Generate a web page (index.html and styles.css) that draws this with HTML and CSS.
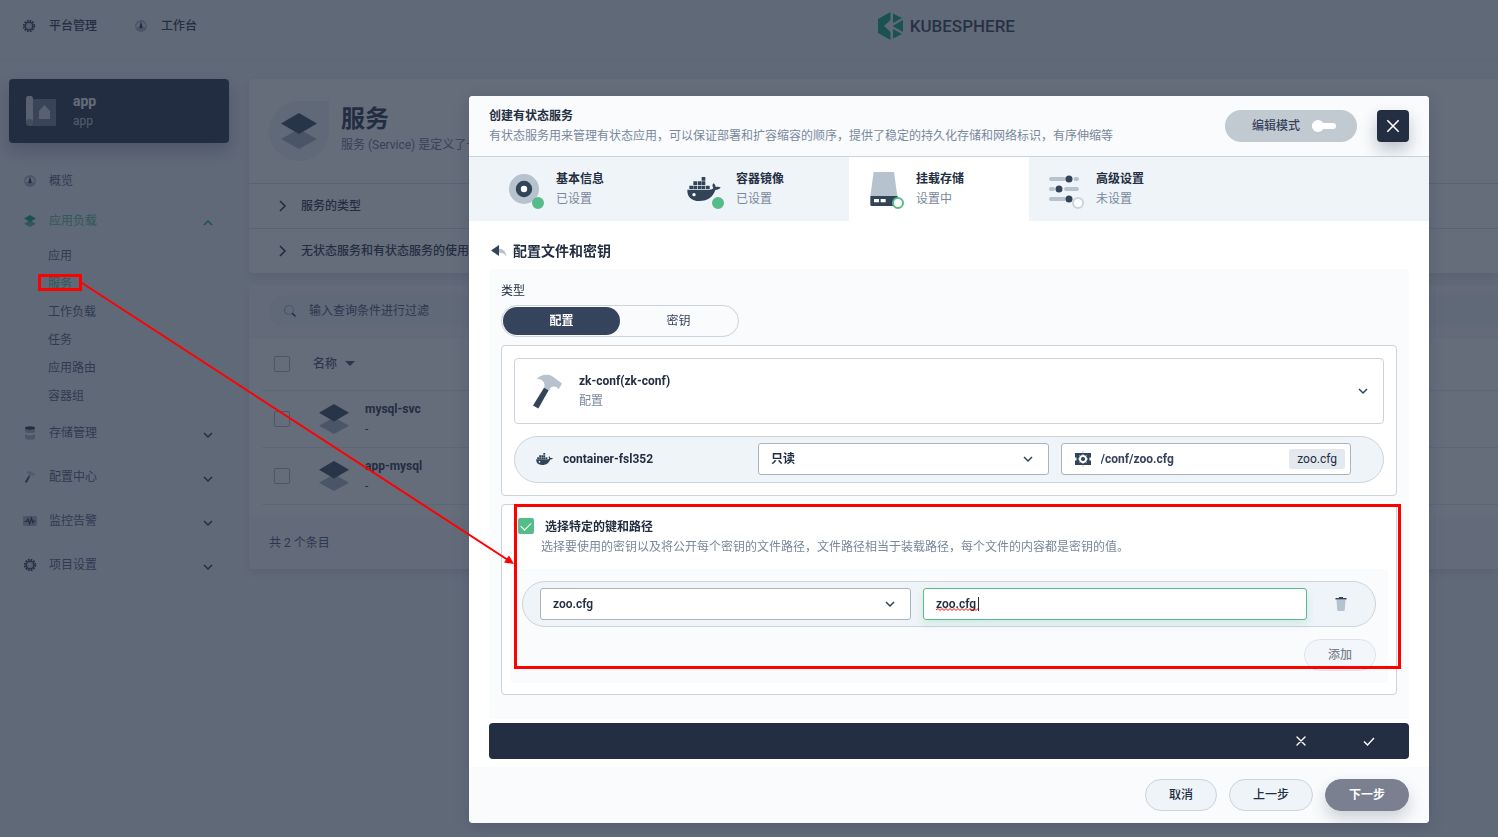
FILE: index.html
```html
<!DOCTYPE html>
<html lang="zh-CN">
<head>
<meta charset="utf-8">
<title>KubeSphere</title>
<link rel="stylesheet" href="styles.css">
</head>
<body>
<svg class="sprite" aria-hidden="true">
  <symbol id="i-gear" viewBox="0 0 16 16">
    <circle cx="8" cy="8" r="5.400" fill="none" stroke="#242e42" stroke-width="1.600" stroke-dasharray="1.700 1.127"/>
    <circle cx="8" cy="8" r="3.900" fill="#b6c2cd" stroke="#242e42" stroke-width="1.400"/>
    <circle cx="8" cy="8" r="1.600" fill="#dde4ea"/>
  </symbol>
  <symbol id="i-dash" viewBox="0 0 16 16">
    <circle cx="8" cy="8" r="6" fill="#a4b2c0"/>
    <path d="M3 9a5 5 0 0 1 10 0z" fill="#dfe6ec"/>
    <path d="M8 3.500l1.400 4.700a1.500 1.500 0 1 1-2.800 0z" fill="#242e42"/>
  </symbol>
  <symbol id="i-layers" viewBox="0 0 36 36">
    <path class="layer-low" d="M0 26l18-10 18 10-18 10z"/>
    <path class="layer-top" d="M0 10.500L18 0l18 10.500L18 21z"/>
  </symbol>
  <symbol id="i-db" viewBox="0 0 16 16">
    <path d="M3 3v3.500c0 1 2 1.500 5 1.500s5-.5 5-1.500V3z" fill="#a4b2c0"/>
    <path d="M3 9v4c0 1 2 1.700 5 1.700s5-.7 5-1.700V9c-1 .9-3 1.200-5 1.200S4 9.900 3 9z" fill="#a4b2c0"/>
    <ellipse cx="8" cy="3" rx="5" ry="1.700" fill="#242e42"/>
  </symbol>
  <symbol id="i-hammer" viewBox="0 0 90 104">
    <path d="M11 15C20 5 29 2 40 2c13 0 21 5 28 12l19 14-10 17c-5-6-10-8-15-8-7 0-11 4-13 12L33 42c3-9 2-15-3-21-5-5-11-7-19-6z" fill="#b6c2cd"/>
    <path d="M33 41l14 7-31 55L0 94z" fill="#324558"/>
  </symbol>
  <symbol id="i-monitor" viewBox="0 0 16 16">
    <rect x="1" y="3" width="14" height="10" rx="1" fill="#a4b2c0"/>
    <path d="M2.500 8.500h2L6 6l1.500 5L9.500 5l1.500 5 1-2h1.500" fill="none" stroke="#242e42" stroke-width="1.200"/>
  </symbol>
  <symbol id="i-docker" viewBox="0 0 100 72">
    <g fill="#324558">
      <path d="M43 0h11v11H43zM18 13h11v11H18zM31 13h11v11H31zM43 13h11v11H43zM6 26h11v10H6zM18 26h11v10H18zM31 26h11v10H31zM43 26h11v10H43zM56 26h11v10H56z"/>
      <path d="M0 38h66c6 0 10-1 12-5-4-5-3-10 0-14 5 3 7 7 7 11 5-1 10-1 15 1-3 6-9 8-16 8C77 59 63 72 36 72 12 72-1 59 0 38z"/>
    </g>
    <circle cx="20" cy="53" r="5" fill="#fff"/>
  </symbol>
  <symbol id="i-disc" viewBox="0 0 30 30">
    <circle cx="15" cy="15" r="15" fill="#b6c2cd"/>
    <circle cx="15" cy="15" r="5.700" fill="#fff" stroke="#324558" stroke-width="5"/>
  </symbol>
  <symbol id="i-drive" viewBox="0 0 82 102">
    <path d="M10 0h61l10 73H0z" fill="#b6c2cd"/>
    <path d="M0 72h82v26a4 4 0 0 1-4 4H4a4 4 0 0 1-4-4z" fill="#324558"/>
    <path d="M11 81h15v10H11zM31 81h15v10H31z" fill="#fff"/>
  </symbol>
  <symbol id="i-sliders" viewBox="0 0 30 28">
    <path d="M2 4h13M26.500 4H28M2 14h2M17 14h11M2 24h13" stroke="#b6c2cd" stroke-width="4" stroke-linecap="round"/>
    <circle cx="20" cy="4" r="3.500" fill="#324558"/><circle cx="10" cy="14" r="3.500" fill="#324558"/><circle cx="20" cy="24" r="3.500" fill="#324558"/>
  </symbol>
  <symbol id="i-down" viewBox="0 0 10 10"><path d="M1 3l4 4 4-4" fill="none" stroke="currentColor" stroke-width="1.500"/></symbol>
  <symbol id="i-up" viewBox="0 0 10 10"><path d="M1 7l4-4 4 4" fill="none" stroke="currentColor" stroke-width="1.500"/></symbol>
  <symbol id="i-right" viewBox="0 0 12 12"><path d="M3 1l5 5-5 5" fill="none" stroke="currentColor" stroke-width="1.600"/></symbol>
  <symbol id="i-x" viewBox="0 0 16 16"><path d="M1.500 1.500l13 13M14.500 1.500l-13 13" fill="none" stroke="currentColor" stroke-width="1.800"/></symbol>
</svg>

<div class="page">
  <header class="topbar">
    <nav class="topnav">
      <a href="#"><svg class="ic16"><use href="#i-gear"/></svg>平台管理</a>
      <a href="#"><svg class="ic16"><use href="#i-dash"/></svg>工作台</a>
    </nav>
    <a class="logo" href="#">
      <svg width="26" height="28" viewBox="0 0 26 28" aria-hidden="true">
        <g fill="#00a971"><path d="M0 7L12.500 0v8L6 14l6.500 6v8L0 21z"/><path d="M15 1.500l9 4.500-9 5z"/><path d="M25 8v12L14.500 14z"/><path d="M15 17l9 5-9 4.500z"/></g>
      </svg>
      <span>KUBESPHERE</span>
    </a>
  </header>
  <div class="layout">
    <aside class="sidebar">
      <div class="project">
        <svg width="30" height="30" viewBox="0 0 30 30" aria-hidden="true">
          <path d="M6 3h24v27H3z" fill="#6c788c"/><path d="M0 3a3.400 3.400 0 0 1 7 0v23H0z" fill="#d5dbe2"/><circle cx="3.500" cy="26.500" r="3.500" fill="#8893a3"/><path d="M13 23v-8l5.500-6 5.500 6v8z" fill="#d5dbe2"/>
        </svg>
        <div><strong>app</strong><span>app</span></div>
      </div>
      <ul class="menu">
        <li><a class="item" href="#"><svg class="ic16"><use href="#i-dash"/></svg>概览</a></li>
        <li><a class="item on" href="#"><svg class="ic12"><use href="#i-layers"/></svg>应用负载<svg class="chev"><use href="#i-up"/></svg></a>
          <ul class="submenu">
            <li><a href="#">应用</a></li>
            <li><a class="on" href="#">服务</a></li>
            <li><a href="#">工作负载</a></li>
            <li><a href="#">任务</a></li>
            <li><a href="#">应用路由</a></li>
            <li><a href="#">容器组</a></li>
          </ul>
        </li>
        <li><a class="item tall" href="#"><svg class="ic16"><use href="#i-db"/></svg>存储管理<svg class="chev"><use href="#i-down"/></svg></a></li>
        <li><a class="item tall" href="#"><svg class="ic12"><use href="#i-hammer"/></svg>配置中心<svg class="chev"><use href="#i-down"/></svg></a></li>
        <li><a class="item tall" href="#"><svg class="ic16"><use href="#i-monitor"/></svg>监控告警<svg class="chev"><use href="#i-down"/></svg></a></li>
        <li><a class="item tall" href="#"><svg class="ic16"><use href="#i-gear"/></svg>项目设置<svg class="chev"><use href="#i-down"/></svg></a></li>
      </ul>
    </aside>
    <main class="main">
      <section class="card">
        <div class="intro">
          <div class="leaf"><svg class="ic36"><use href="#i-layers"/></svg></div>
          <div><h1>服务</h1><p>服务 (Service) 是定义了一组</p></div>
        </div>
        <a class="tip" href="#"><svg class="ic12"><use href="#i-right"/></svg>服务的类型</a>
        <a class="tip" href="#"><svg class="ic12"><use href="#i-right"/></svg>无状态服务和有状态服务的使用场景</a>
      </section>
      <section class="card">
        <div class="toolbar">
          <label class="search">
            <svg width="14" height="14" viewBox="0 0 14 14" aria-hidden="true"><circle cx="6" cy="6" r="4.500" fill="none" stroke="#a4b2c0" stroke-width="1.200"/><path d="M9 9l3.500 3.500" stroke="#242e42" stroke-width="1.600"/></svg>
            <input type="text" aria-label="查询" placeholder="输入查询条件进行过滤">
          </label>
        </div>
        <table class="list">
          <thead><tr><th class="c-check"><input type="checkbox" aria-label="全选"></th><th colspan="2" class="c-head">名称<i class="caret-down"></i></th></tr></thead>
          <tbody>
            <tr><td class="c-check"><input type="checkbox" aria-label="mysql-svc"></td><td class="c-icon"><svg class="ic30"><use href="#i-layers"/></svg></td><td class="c-name"><strong>mysql-svc</strong><span>-</span></td></tr>
            <tr><td class="c-check"><input type="checkbox" aria-label="app-mysql"></td><td class="c-icon"><svg class="ic30"><use href="#i-layers"/></svg></td><td class="c-name"><strong>app-mysql</strong><span>-</span></td></tr>
          </tbody>
        </table>
        <div class="total">共 2 个条目</div>
      </section>
    </main>
  </div>
</div>

<div class="mask">
  <div class="modal" role="dialog" aria-labelledby="dlg-title">
    <header class="m-head">
      <div class="m-title"><h2 id="dlg-title">创建有状态服务</h2><p>有状态服务用来管理有状态应用，可以保证部署和扩容缩容的顺序，提供了稳定的持久化存储和网络标识，有序伸缩等</p></div>
      <button class="mode" type="button">编辑模式<i class="switch"></i></button>
      <button class="close" type="button" aria-label="关闭"><svg width="14" height="14"><use href="#i-x"/></svg></button>
    </header>
    <nav class="tabs">
      <a class="tab" href="#"><span class="t-icon"><svg width="30" height="30"><use href="#i-disc"/></svg><i class="dot done"></i></span><span><b>基本信息</b><small>已设置</small></span></a>
      <a class="tab" href="#"><span class="t-icon"><svg width="34" height="24"><use href="#i-docker"/></svg><i class="dot done"></i></span><span><b>容器镜像</b><small>已设置</small></span></a>
      <a class="tab current" href="#"><span class="t-icon"><svg width="28" height="34"><use href="#i-drive"/></svg><i class="dot doing"></i></span><span><b>挂载存储</b><small>设置中</small></span></a>
      <a class="tab" href="#"><span class="t-icon"><svg width="30" height="28"><use href="#i-sliders"/></svg><i class="dot"></i></span><span><b>高级设置</b><small>未设置</small></span></a>
    </nav>
    <form class="m-body">
      <h3><a href="#" aria-label="返回"><svg width="16" height="12" viewBox="0 0 16 12"><path d="M7 3.500c5 0 8 3 8.500 8-2-3-4.500-4-8.500-4z" fill="#b6c2cd"/><path d="M0 5.500L8 0v11z" fill="#324558"/></svg></a>配置文件和密钥</h3>
      <div class="panel">
        <div class="label" id="kind">类型</div>
        <div class="segment" role="group" aria-labelledby="kind">
          <button class="active" type="button">配置</button><button type="button">密钥</button>
        </div>
        <div class="box pad">
          <button class="resource" type="button" aria-haspopup="listbox">
            <svg width="30" height="35"><use href="#i-hammer"/></svg>
            <span class="r-text"><b>zk-conf(zk-conf)</b><small>配置</small></span>
            <svg class="ch"><use href="#i-down"/></svg>
          </button>
          <div class="pill mount">
            <div class="container"><svg width="17" height="12"><use href="#i-docker"/></svg>container-fsl352</div>
            <div class="select"><select aria-label="读写模式"><option>只读</option></select><svg class="ch"><use href="#i-down"/></svg></div>
            <div class="field path">
              <svg width="16" height="16" viewBox="0 0 16 16" aria-hidden="true"><path d="M7.500 0h1v16h-1z" fill="#b6c2cd"/><path d="M0 2h16v4.500h-1.500v3H16V14H0V9.500h1.500v-3H0z" fill="#324558"/><circle cx="8" cy="8" r="3" fill="none" stroke="#fff" stroke-width="2"/><path d="M8 3.200v9.600M3.200 8h9.600M4.600 4.600l6.800 6.800M11.400 4.600l-6.800 6.800" stroke="#fff" stroke-width="1"/><circle cx="8" cy="8" r="2" fill="#324558"/></svg>
              <input type="text" aria-label="挂载路径" value="/conf/zoo.cfg">
              <span class="tag">zoo.cfg</span>
            </div>
          </div>
        </div>
        <div class="box keys">
          <label class="pick"><input type="checkbox" checked><b>选择特定的键和路径</b></label>
          <p>选择要使用的密钥以及将公开每个密钥的文件路径，文件路径相当于装载路径，每个文件的内容都是密钥的值。</p>
          <div class="items">
            <div class="pill kv">
              <div class="select"><select aria-label="键"><option>zoo.cfg</option></select><svg class="ch"><use href="#i-down"/></svg></div>
              <div class="field focus">
                <input type="text" aria-label="路径" value="zoo.cfg" spellcheck="false">
                <svg class="squiggle" width="43" height="3" viewBox="0 0 43 3" aria-hidden="true"><path d="M0 2l2-1.500 2 2 2-2 2 2 2-2 2 2 2-2 2 2 2-2 2 2 2-2 2 2 2-2 2 2 2-2 2 2 2-2 2 2 2-2 2 2 2-2 1 1" fill="none" stroke="#f00"/></svg>
                <i class="cursor"></i>
              </div>
              <button class="trash" type="button" aria-label="删除"><svg width="12" height="14" viewBox="0 0 12 14"><path d="M1.500 3h9l-.7 9.500a1.500 1.500 0 0 1-1.500 1.500H3.700a1.500 1.500 0 0 1-1.500-1.500z" fill="#b6c2cd"/><path d="M.5 1H4V0h4v1h3.500v1.500H.5z" fill="#324558"/></svg></button>
            </div>
            <button class="btn add" type="button">添加</button>
          </div>
        </div>
      </div>
      <div class="confirm">
        <button type="button" aria-label="取消编辑"><svg width="12" height="12" viewBox="0 0 12 12"><path d="M2 2l8 8M10 2l-8 8" fill="none" stroke="currentColor" stroke-width="1.400" stroke-linecap="round"/></svg></button>
        <button type="button" aria-label="确认"><svg width="12" height="12" viewBox="0 0 12 12"><path d="M1 6.500L4.500 10 11 3" fill="none" stroke="currentColor" stroke-width="1.400"/></svg></button>
      </div>
    </form>
    <footer class="m-foot">
      <button class="btn" type="button">取消</button>
      <button class="btn wide" type="button">上一步</button>
      <button class="btn wide next" type="button">下一步</button>
    </footer>
  </div>
</div>

<svg class="marks" aria-hidden="true">
  <g fill="none" stroke="#f00" stroke-width="3">
    <rect x="39.500" y="275.500" width="41" height="14"/>
    <rect x="515.500" y="505.500" width="884" height="162"/>
  </g>
  <path d="M82 283l426 277" stroke="#f00" stroke-width="2"/>
  <path d="M514 564l-10-1.500 5-7z" fill="#f00"/>
</svg>
</body>
</html>
```
FILE: styles.css
```css
* { box-sizing: border-box; }
html, body { height: 100%; }
body {
  margin: 0;
  overflow: hidden;
  background: #eff4f9;
  color: #242e42;
  font: 12px/20px Roboto, "Noto Sans CJK SC", sans-serif;
}
h1, h2, h3, p, ul { margin: 0; padding: 0; }
ul { list-style: none; }
a { color: inherit; text-decoration: none; }
button, input, select { font: inherit; color: inherit; margin: 0; }
button { cursor: pointer; padding: 0; border: 0; background: none; }
small { font-size: 12px; }
svg { flex: none; display: block; }
b, strong { font-weight: 600; }
.sprite { position: absolute; width: 0; height: 0; }
.ic12 { width: 12px; height: 12px; }
.ic16 { width: 16px; height: 16px; }
.ic30 { width: 30px; height: 30px; }
.ic36 { width: 36px; height: 36px; }
.layer-low { fill: var(--layer-low, #a4b2c0); }
.layer-top { fill: var(--layer-top, #324558); }
.on { color: #55bc8a; --layer-top: #00a971; --layer-low: #55bc8a; }

/* Top bar */
.topbar {
  display: flex;
  align-items: center;
  height: 60px;
  padding: 0 0 8px 21px;
  border-bottom: 1px solid #e3e9ef;
}
.topnav { display: flex; gap: 36px; width: 58%; }
.topnav a { display: flex; align-items: center; gap: 12px; font-weight: 500; }
.logo { display: flex; align-items: center; gap: 6px; color: #303a4c; font-size: 17px; font-weight: 500; }

/* Sidebar */
.layout { display: flex; gap: 20px; padding: 19px 0 0 9px; }
.sidebar { flex: 0 0 220px; }
.project {
  display: flex;
  align-items: center;
  gap: 17px;
  height: 64px;
  padding: 0 17px;
  border-radius: 4px;
  background: #242e42;
  box-shadow: 0 8px 16px rgba(36, 46, 66, .3);
  color: #fff;
}
.project strong, .project span { display: block; }
.project strong { font-size: 14px; font-weight: 700; }
.project span { color: #c1c9d1; }
.menu { padding-top: 18px; color: #4a5974; }
.item { display: flex; align-items: center; gap: 11px; height: 40px; padding: 0 16px 0 13px; }
.item.tall { height: 44px; }
.item .ic12 { margin: 0 2px; }
.item .chev { width: 10px; height: 10px; margin: 3px 0 0 auto; color: #242e42; }
.item.on .chev { color: #00a971; }
.submenu { padding: 1px 0 1px 39px; }
.submenu a { display: block; line-height: 28px; }

/* Main column */
.main { flex: 1; display: grid; gap: 12px; align-content: start; }
.card { background: #fff; border-radius: 4px 0 0 4px; box-shadow: 0 4px 8px rgba(36, 46, 66, .1); overflow: hidden; }
.intro { display: flex; gap: 12px; height: 104px; padding: 22px 20px; }
.leaf { display: grid; place-items: center; width: 60px; height: 60px; border-radius: 50% 0 50% 50%; background: #eff4f9; }
.intro h1 { font-size: 24px; line-height: 36px; font-weight: 600; }
.intro p { line-height: 16px; color: #5f708a; }
.tip { display: flex; align-items: center; gap: 12px; height: 45px; padding: 0 28px; border-top: 1px solid #d5dde4; font-weight: 500; }
.toolbar { padding: 10px 0 10px 20px; background: #f9fbfd; border-bottom: 1px solid #eff4f9; }
.search { display: flex; align-items: center; gap: 12px; height: 32px; padding: 0 14px; border-radius: 16px 0 0 16px; background: #eff4f9; }
.search input { flex: 1; border: 0; padding: 0; background: none; outline: 0; }
.search input::placeholder { color: #404e68; }
.list { width: 100%; border-spacing: 0; padding-left: 13px; }
.list th { height: 52px; padding: 0; text-align: left; font-weight: 500; color: #404e68; }
.list td { height: 57px; padding: 0; border-top: 1px solid #e3e9ef; }
.list tbody tr:last-child td { border-bottom: 1px solid #e3e9ef; height: 58px; }
.c-check { width: 51px; }
.c-icon { width: 52px; }
.c-check input { appearance: none; display: block; width: 16px; height: 16px; margin-left: 12px; border: 1px solid #abb4be; border-radius: 2px; }
.c-icon svg { margin-left: 6px; }
.c-name strong, .c-name span { display: block; }
.c-name strong { font-weight: 700; }
.caret-down { display: inline-block; margin-left: 8px; border: 5px solid transparent; border-top-color: #404e68; border-bottom: 0; vertical-align: 2px; }
.total { margin-top: 12px; padding: 16px 20px; background: #f9fbfd; color: #404e68; }

/* Dialog */
.mask { position: fixed; inset: 0; padding: 96px 69px 14px 469px; background: rgba(36, 46, 66, .7); }
.modal { display: flex; flex-direction: column; height: 100%; border-radius: 4px; background: #fff; overflow: hidden; box-shadow: 0 4px 16px rgba(36, 46, 66, .2); }
.m-head { display: flex; align-items: center; height: 61px; padding: 0 20px; background: #f9fbfd; border-bottom: 1px solid #ccd3db; }
.m-title { flex: 1; }
.m-title h2 { font-size: 12px; font-weight: 600; }
.m-title p { color: #79879c; }
.mode { display: flex; align-items: center; justify-content: center; gap: 12px; width: 132px; height: 32px; padding-left: 6px; border-radius: 16px; background: #c1c9d1; color: #36435c; font-weight: 500; }
.switch { position: relative; width: 24px; height: 6px; border-radius: 3px; background: #fff; }
.switch::before { content: ""; position: absolute; left: 0; top: -3px; width: 12px; height: 12px; border-radius: 50%; background: #fff; }
.close { display: grid; place-items: center; width: 32px; height: 32px; margin-left: 20px; border-radius: 4px; background: #242e42; color: #fff; box-shadow: 0 8px 16px rgba(36, 46, 66, .28); }
.tabs { display: flex; padding: 0 20px; background: #eff4f9; }
.tab { display: flex; align-items: center; gap: 12px; flex: 0 0 180px; height: 64px; padding-left: 15px; }
.tab.current { background: #fff; }
.tab b, .tab small { display: block; }
.tab small { color: #79879c; }
.t-icon { position: relative; display: grid; place-items: center; width: 40px; height: 40px; }
.dot { position: absolute; right: 0; bottom: 0; width: 12px; height: 12px; border: 2px solid #ccd3db; border-radius: 50%; background: #fff; }
.dot.done { border-color: #55bc8a; background: #55bc8a; }
.dot.doing { border-color: #55bc8a; }
.m-body { flex: 1; display: flex; flex-direction: column; padding: 20px 20px 8px; }
.m-body h3 { display: flex; align-items: center; gap: 6px; padding-left: 2px; margin-bottom: 8px; font-size: 14px; font-weight: 600; }
.panel { flex: 1; padding: 12px 12px 24px; border-radius: 4px; background: #f9fbfd; }
.segment { display: flex; width: 238px; height: 32px; margin: 4px 0 8px; padding: 1px; border: 1px solid #ccd3db; border-radius: 16px; }
.segment button { flex: 1; border-radius: 14px; color: #36435c; }
.segment .active { background: #36435c; color: #fff; font-weight: 600; }
.box { border: 1px solid #ccd3db; border-radius: 4px; background: #fff; }
.pad { padding: 12px; }
.resource { display: flex; align-items: center; width: 100%; height: 66px; padding: 0 15px 0 18px; border: 1px solid #ccd3db; border-radius: 4px; text-align: left; }
.r-text { flex: 1; padding-left: 16px; }
.r-text b, .r-text small { display: block; }
.r-text b { font-weight: 700; }
.r-text small { color: #79879c; }
.ch { width: 10px; height: 10px; color: #324558; }
.pill { display: grid; align-items: center; gap: 12px; border: 1px solid #ccd3db; border-radius: 24px; background: #eff4f9; }
.mount { grid-template-columns: 210px 1fr 1fr; margin-top: 12px; padding: 6px 32px 7px 21px; }
.container { display: flex; align-items: center; gap: 10px; font-weight: 700; }
.select, .field { position: relative; display: flex; align-items: center; height: 32px; border: 1px solid #abb4be; border-radius: 3px; background: #fff; font-weight: 600; color: #242e42; }
.select select { appearance: none; width: 100%; height: 100%; padding: 0 32px 0 12px; border: 0; background: none; outline: 0; }
.select .ch { position: absolute; right: 15px; pointer-events: none; }
.field { gap: 10px; padding: 0 5px 0 13px; }
.field input { flex: 1; min-width: 0; height: 100%; padding: 0; border: 0; background: none; outline: 0; }
.path { color: #36435c; font-weight: 700; }
.tag { padding: 0 8px; border-radius: 2px; background: #e3e9ef; color: #242e42; font-weight: 400; }
.keys { margin-top: 8px; padding: 12px 8px 11px; }
.pick { display: flex; align-items: flex-start; gap: 11px; padding-left: 8px; }
.pick input { appearance: none; position: relative; width: 16px; height: 16px; margin-top: 1px; border-radius: 2px; background: #55bc8a; }
.pick input::after { content: ""; position: absolute; left: 5px; top: 2px; width: 5px; height: 9px; border: solid #fff; border-width: 0 1px 1px 0; transform: rotate(45deg); }
.keys p { padding-left: 31px; color: #79879c; }
.items { display: flex; flex-direction: column; margin-top: 12px; padding: 12px; border-radius: 4px; background: #f9fbfd; }
.kv { grid-template-columns: 371fr 384fr 44px; padding: 6px 12px 6px 17px; }
.focus { padding-left: 12px; border-color: #55bc8a; box-shadow: 0 4px 8px rgba(85, 188, 138, .2); }
.squiggle { position: absolute; left: 12px; bottom: 8px; }
.cursor { position: absolute; left: 54px; top: 8px; width: 1px; height: 14px; background: #242e42; }
.trash { display: grid; place-items: center; height: 32px; }
.btn { width: 72px; height: 32px; border: 1px solid #ccd3db; border-radius: 16px; background: #eff4f9; font-weight: 500; }
.btn.wide { width: 84px; }
.btn.next { border-color: #7a8090; background: #7a8090; color: #fff; font-weight: 600; box-shadow: 0 8px 16px rgba(36, 46, 66, .2); }
.btn.add { align-self: flex-end; margin-top: 12px; opacity: .6; }
.confirm { display: flex; align-items: center; justify-content: flex-end; gap: 44px; height: 36px; margin-top: 4px; padding-right: 28px; border-radius: 4px; background: #242e42; color: #fff; }
.confirm button { display: grid; place-items: center; width: 24px; height: 24px; }
.m-foot { display: flex; justify-content: flex-end; gap: 12px; padding: 12px 20px; background: #f9fbfd; }

/* Callout drawn over the page */
.marks { position: fixed; inset: 0; width: 100%; height: 100%; pointer-events: none; }
```
